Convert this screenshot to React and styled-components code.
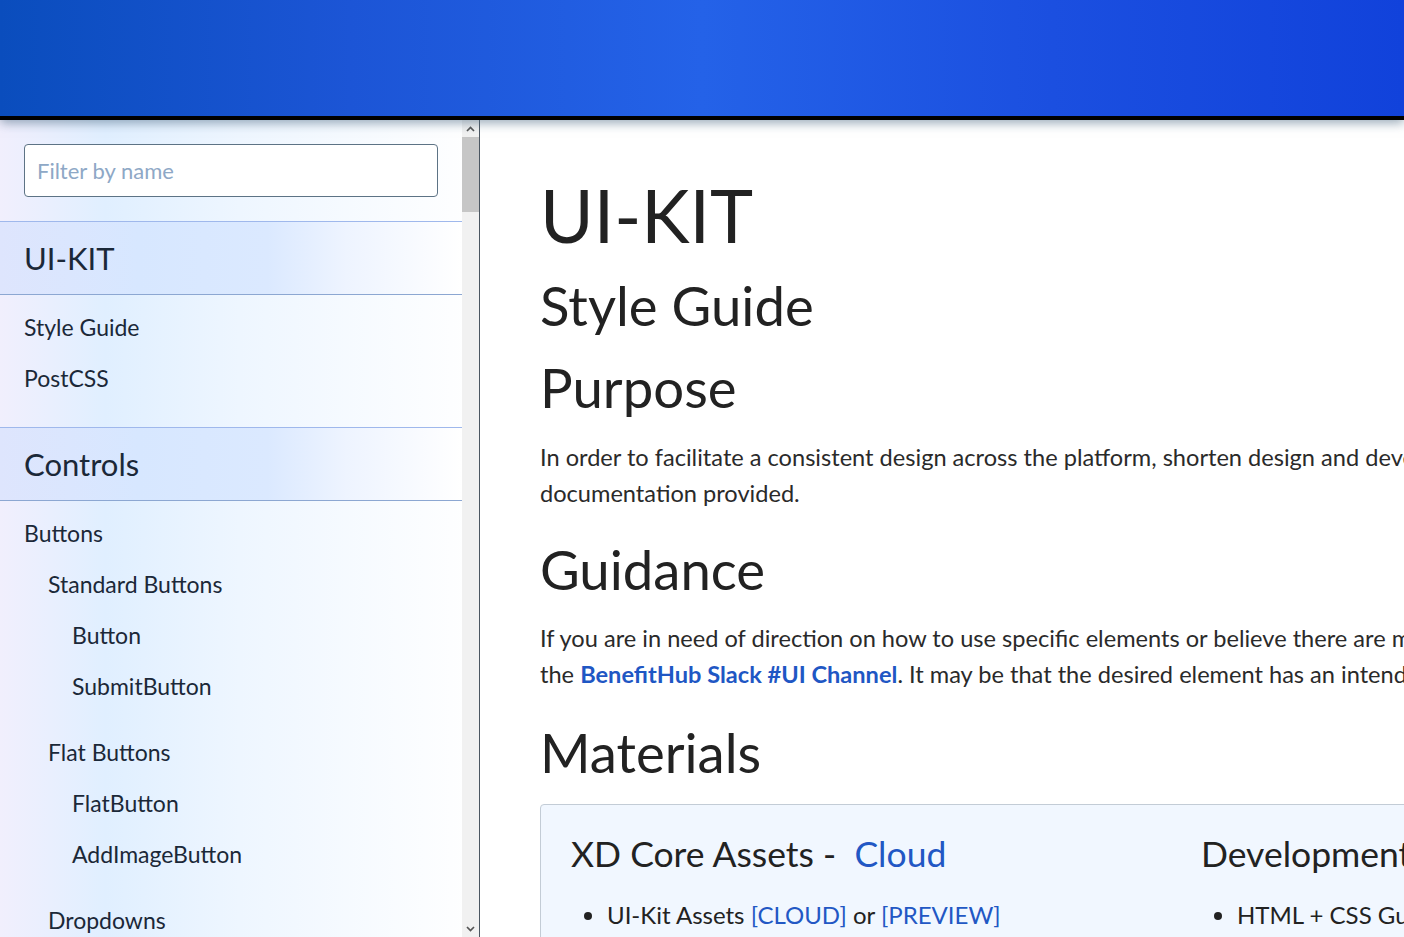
import React from 'react'
import styled, { createGlobalStyle } from 'styled-components'

const GlobalStyle = createGlobalStyle`
  html, body {
    margin: 0;
    padding: 0;
    height: 100%;
    overflow: hidden;
  }
  body {
    font-family: Lato, "Open Sans", "Liberation Sans", sans-serif;
    color: #222;
  }
  #root {
    height: 100%;
  }
  * {
    box-sizing: border-box;
  }
`

const Page = styled.div`
  height: 100vh;
  display: flex;
  flex-direction: column;
`

const TopBar = styled.header`
  position: relative;
  z-index: 2;
  flex: 0 0 120px;
  background: linear-gradient(90deg, #0a4dbd 0%, #1c55d6 25%, #2462e8 50%, #1b4fe0 75%, #1142db 100%);
  border-bottom: 4px solid #000;
  box-shadow: 0 3px 10px rgba(70, 100, 125, 0.55);
`

const Body = styled.div`
  flex: 1;
  display: flex;
  min-height: 0;
`

const Sidebar = styled.aside`
  flex: 0 0 480px;
  height: 100%;
  display: flex;
  border-right: 1px solid #4b5661;
  background: linear-gradient(90deg, #f1effd 0%, #e0efff 22%, #eef6ff 50%, #ffffff 100%);
  color: #1b2838;
`

const SidebarScroll = styled.div`
  flex: 1;
  min-width: 0;
  overflow: hidden;
`

const ScrollTrack = styled.div`
  flex: 0 0 17px;
  display: flex;
  flex-direction: column;
  background: #f1f1f1;
`

const ScrollButton = styled.div`
  flex: 0 0 17px;
  display: flex;
  align-items: center;
  justify-content: center;
`

const ScrollThumb = styled.div`
  flex: 0 0 75px;
  background: #c6c6c6;
`

const ScrollSpacer = styled.div`
  flex: 1;
`

const FilterWrap = styled.div`
  padding: 24px;
`

const FilterInput = styled.input`
  display: block;
  width: 100%;
  height: 53px;
  padding: 0 12px;
  border: 1px solid #5d7385;
  border-radius: 4px;
  background: #fff;
  font-family: Lato, sans-serif;
  font-size: 22px;
  color: #222;
  outline: none;
  &::placeholder {
    color: #8ea8c6;
  }
`

const SectionTitle = styled.div`
  height: 74px;
  display: flex;
  align-items: center;
  padding: 0 24px;
  font-size: 31px;
  border-top: 1px solid #9fb8ec;
  border-bottom: 1px solid #8ca7d2;
  background: linear-gradient(90deg, #dee5fd 0%, #d7e7ff 30%, #dbe9ff 58%, #eef4ff 75%, #ffffff 100%);
`

const NavList = styled.ul`
  list-style: none;
  margin: 0;
  padding: ${({ $root }) => ($root ? '7px 0 23px' : '0')};
  margin-bottom: ${({ $root }) => ($root ? '0' : '15px')};
`

const NavItem = styled.li`
  margin: 0;
`

const NavLabel = styled.div`
  height: 51px;
  line-height: 51px;
  font-size: 23px;
  padding-left: ${({ $level }) => 24 + $level * 24}px;
  white-space: nowrap;
`

const Main = styled.main`
  flex: 1;
  min-width: 0;
  overflow: hidden;
  background: #fff;
`

const Content = styled.div`
  width: 1500px;
  padding: 52px 0 0 60px;
  display: flex;
  flex-direction: column;
  align-items: flex-start;
`

const Title = styled.h1`
  margin: 0;
  font-size: 73px;
  font-weight: 400;
  line-height: 1.2;
  color: #222;
`

const Heading = styled.h2`
  margin: ${({ $top }) => $top}px 0 0;
  font-size: 54.5px;
  font-weight: 400;
  line-height: 1.2;
  color: #222;
`

const Paragraph = styled.p`
  margin: ${({ $top }) => $top}px 0 12px;
  font-size: 23.6px;
  line-height: 36px;
  color: #2a2a2a;
  white-space: nowrap;
`

const StrongLink = styled.a`
  color: #1f57c4;
  font-weight: 700;
  text-decoration: none;
`

const Link = styled.a`
  color: #2257c4;
  text-decoration: none;
`

const AssetBox = styled.section`
  margin-top: 19px;
  width: 1300px;
  padding: 28px 30px 26px;
  border: 1px solid #c3ccd6;
  border-radius: 4px;
  background: #f1f7ff;
  display: grid;
  grid-template-columns: 600px 600px;
  column-gap: 30px;
`

const AssetColumn = styled.div`
  display: flex;
  flex-direction: column;
`

const AssetTitle = styled.h3`
  margin: 0;
  font-size: 35.5px;
  font-weight: 400;
  line-height: 1.2;
  color: #222;
  white-space: nowrap;
`

const AssetList = styled.ul`
  margin: 21px 0 0;
  padding-left: 36px;
  font-size: 24px;
  line-height: 36px;
  color: #222;
  white-space: nowrap;
`

const Chevron = ({ up }) => (
  <svg width="9" height="6" viewBox="0 0 9 6">
    <path
      d={up ? 'M1 5 L4.5 1.5 L8 5' : 'M1 1 L4.5 4.5 L8 1'}
      fill="none"
      stroke="#555"
      strokeWidth="1.7"
    />
  </svg>
)

const nav = [
  {
    title: 'UI-KIT',
    items: [{ label: 'Style Guide' }, { label: 'PostCSS' }],
  },
  {
    title: 'Controls',
    items: [
      {
        label: 'Buttons',
        children: [
          { label: 'Standard Buttons', children: [{ label: 'Button' }, { label: 'SubmitButton' }] },
          { label: 'Flat Buttons', children: [{ label: 'FlatButton' }, { label: 'AddImageButton' }] },
          { label: 'Dropdowns', children: [{ label: 'Dropdown' }, { label: 'SelectDropdown' }] },
        ],
      },
    ],
  },
]

const NavTree = ({ items, level = 0 }) => (
  <NavList $root={level === 0}>
    {items.map((item) => (
      <NavItem key={item.label}>
        <NavLabel $level={level}>{item.label}</NavLabel>
        {item.children && <NavTree items={item.children} level={level + 1} />}
      </NavItem>
    ))}
  </NavList>
)

const App = () => {
  return (
    <Page>
      <GlobalStyle />
      <TopBar />
      <Body>
        <Sidebar>
          <SidebarScroll>
            <FilterWrap>
              <FilterInput placeholder="Filter by name" />
            </FilterWrap>
            {nav.map((section) => (
              <div key={section.title}>
                <SectionTitle>{section.title}</SectionTitle>
                <NavTree items={section.items} />
              </div>
            ))}
          </SidebarScroll>
          <ScrollTrack>
            <ScrollButton><Chevron up /></ScrollButton>
            <ScrollThumb />
            <ScrollSpacer />
            <ScrollButton><Chevron /></ScrollButton>
          </ScrollTrack>
        </Sidebar>
        <Main>
          <Content>
            <Title>UI-KIT</Title>
            <Heading $top={13}>Style Guide</Heading>
            <Heading $top={17}>Purpose</Heading>
            <Paragraph $top={19}>
              In order to facilitate a consistent design across the platform, shorten design and development time, please use the components and
              <br />
              documentation provided.
            </Paragraph>
            <Heading $top={14}>Guidance</Heading>
            <Paragraph $top={17}>
              If you are in need of direction on how to use specific elements or believe there are missing elements, please reach out on
              <br />
              the <StrongLink href="#">BenefitHub Slack #UI Channel</StrongLink>. It may be that the desired element has an intended replacement.
            </Paragraph>
            <Heading $top={16}>Materials</Heading>
            <AssetBox>
              <AssetColumn>
                <AssetTitle>
                  XD Core Assets -&nbsp; <Link href="#">Cloud</Link>
                </AssetTitle>
                <AssetList>
                  <li>
                    UI-Kit Assets <Link href="#">[CLOUD]</Link> or <Link href="#">[PREVIEW]</Link>
                  </li>
                </AssetList>
              </AssetColumn>
              <AssetColumn>
                <AssetTitle>Development Assets</AssetTitle>
                <AssetList>
                  <li>HTML + CSS Guide</li>
                </AssetList>
              </AssetColumn>
            </AssetBox>
          </Content>
        </Main>
      </Body>
    </Page>
  )
}

export default App
